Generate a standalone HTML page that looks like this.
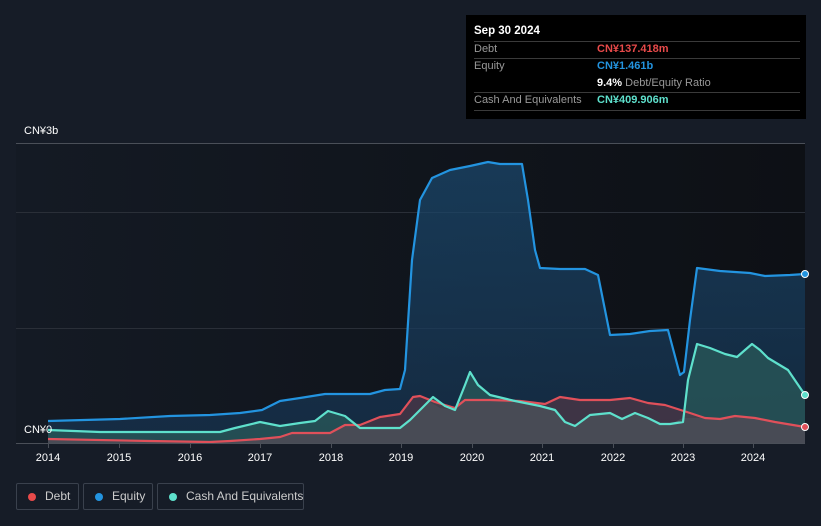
<!DOCTYPE html>
<html><head><meta charset="utf-8"><style>
body{margin:0;width:821px;height:526px;background:#161c27;font-family:"Liberation Sans","Noto Sans CJK SC",sans-serif;position:relative;overflow:hidden}
.tt{position:absolute;left:466px;top:15px;width:340px;height:104px;background:#000;color:#fff;font-size:11px}
.tt .r{position:absolute;left:8px;right:6px;border-top:1px solid #3a3a3a}
.tt span{position:absolute;white-space:nowrap}
.lab{position:absolute;color:#fff;font-size:11px}
.leg{position:absolute;top:483px;height:27px;border:1px solid #3a414d;border-radius:2px;color:#ccc;font-size:12px;line-height:25px;box-sizing:border-box;white-space:nowrap}
.leg i{position:absolute;left:11px;top:9px;width:8px;height:8px;border-radius:50%}
</style></head><body>
<svg width="821" height="526" style="position:absolute;left:0;top:0">
<defs>
<linearGradient id="ge" x1="0" y1="0" x2="0" y2="1"><stop offset="0" stop-color="#1b4a70" stop-opacity=".7"/><stop offset="1" stop-color="#163350" stop-opacity=".7"/></linearGradient>
<linearGradient id="pb" x1="0" y1="0" x2="1" y2="0"><stop offset="0" stop-color="#141a24"/><stop offset="1" stop-color="#0d1015"/></linearGradient>
</defs>
<rect x="16" y="143" width="789" height="300" fill="url(#pb)"/>
<line x1="16" y1="143.5" x2="805" y2="143.5" stroke="#4a4f58"/>
<line x1="16" y1="212.5" x2="805" y2="212.5" stroke="#2a2f38"/>
<line x1="16" y1="328.5" x2="805" y2="328.5" stroke="#2a2f38"/>
<polygon fill="url(#ge)" points="48,443 48,421 120,419 170,416 210,415 240,413 262,410 280,401 300,398 325,394 370,394 385,390 400,389 405,370 412,260 420,200 432,178 450,170 470,166 488,162 500,164 522,164 528,200 535,250 540,268 560,269 585,269 598,275 605,310 610,335 630,334 650,331 668,330 672,345 680,375 684,372 690,320 697,268 720,271 750,273 765,276 790,275 805,274 805,443"/>
<polygon fill="#2a5a5a" fill-opacity=".75" points="48,443 48,430 100,432 220,432 235,428 260,422 280,426 300,423 315,421 328,411 345,416 360,428 400,428 410,420 420,410 433,397 445,406 455,410 465,385 470,372 478,385 490,395 515,401 540,406 555,410 565,422 575,426 590,415 610,413 622,419 635,413 648,418 660,424 670,424 683,422 688,380 697,344 710,348 725,354 737,357 745,350 752,344 760,350 768,358 788,370 805,395 805,443"/>
<polygon fill="#5a3a48" fill-opacity=".6" points="48,443 48,439 150,441 210,442 230,441 260,439 280,437 292,433 330,433 345,425 360,425 380,417 400,414 413,397 420,396 435,402 455,408 465,400 490,400 520,401 545,404 560,397 580,400 610,400 630,398 648,403 665,405 690,413 705,418 720,419 735,416 755,418 775,422 805,427 805,443"/>
<polygon fill="#4a4e58" fill-opacity=".8" points="48,443 48,440 150,441 210,442 230,441 260,439 280,437 292,433 330,433 345,425 360,428 400,428 410,420 420,410 430,402 440,408 455,410 465,400 490,400 515,401 540,406 555,410 565,422 575,426 590,415 610,413 622,419 635,413 648,418 660,424 670,424 683,418 705,418 720,419 735,416 755,418 775,422 805,427 805,443"/>
<g fill="none" stroke-width="2.2" stroke-linejoin="round">
<polyline stroke="#2394e0" points="48,421 120,419 170,416 210,415 240,413 262,410 280,401 300,398 325,394 370,394 385,390 400,389 405,370 412,260 420,200 432,178 450,170 470,166 488,162 500,164 522,164 528,200 535,250 540,268 560,269 585,269 598,275 605,310 610,335 630,334 650,331 668,330 672,345 680,375 684,372 690,320 697,268 720,271 750,273 765,276 790,275 805,274"/>
<polyline stroke="#e0505a" points="48,439 150,441 210,442 230,441 260,439 280,437 292,433 330,433 345,425 360,425 380,417 400,414 413,397 420,396 435,402 455,408 465,400 490,400 520,401 545,404 560,397 580,400 610,400 630,398 648,403 665,405 690,413 705,418 720,419 735,416 755,418 775,422 805,427"/>
<polyline stroke="#5ee0cc" points="48,430 100,432 220,432 235,428 260,422 280,426 300,423 315,421 328,411 345,416 360,428 400,428 410,420 420,410 433,397 445,406 455,410 465,385 470,372 478,385 490,395 515,401 540,406 555,410 565,422 575,426 590,415 610,413 622,419 635,413 648,418 660,424 670,424 683,422 688,380 697,344 710,348 725,354 737,357 745,350 752,344 760,350 768,358 788,370 805,395"/>
</g>
<circle cx="805" cy="274" r="3.5" fill="#2394e0" stroke="#fff" stroke-width="1"/>
<circle cx="805" cy="395" r="3.5" fill="#5ee0cc" stroke="#fff" stroke-width="1"/>
<circle cx="805" cy="427" r="3.5" fill="#e0505a" stroke="#fff" stroke-width="1"/>
<line x1="16" y1="443.5" x2="805" y2="443.5" stroke="#4a4f58"/>
<g stroke="#4a4f58"><line x1="48.5" y1="443" x2="48.5" y2="448"/><line x1="119.5" y1="443" x2="119.5" y2="448"/><line x1="190.5" y1="443" x2="190.5" y2="448"/><line x1="260.5" y1="443" x2="260.5" y2="448"/><line x1="331.5" y1="443" x2="331.5" y2="448"/><line x1="401.5" y1="443" x2="401.5" y2="448"/><line x1="472.5" y1="443" x2="472.5" y2="448"/><line x1="542.5" y1="443" x2="542.5" y2="448"/><line x1="613.5" y1="443" x2="613.5" y2="448"/><line x1="683.5" y1="443" x2="683.5" y2="448"/><line x1="753.5" y1="443" x2="753.5" y2="448"/></g>
<g fill="#fff" font-size="11" text-anchor="middle" font-family="Liberation Sans,sans-serif">
<text x="48" y="461">2014</text><text x="119" y="461">2015</text><text x="190" y="461">2016</text><text x="260" y="461">2017</text><text x="331" y="461">2018</text><text x="401" y="461">2019</text><text x="472" y="461">2020</text><text x="542" y="461">2021</text><text x="613" y="461">2022</text><text x="683" y="461">2023</text><text x="753" y="461">2024</text>
</g>
</svg>
<div class="lab" style="left:24px;top:125px">CN¥3b</div>
<div class="lab" style="left:24px;top:424px">CN¥0</div>
<div class="tt">
<span style="left:8px;top:10px;font-weight:bold;font-size:11.5px">Sep 30 2024</span>
<div class="r" style="top:26px"></div>
<span style="left:8px;top:28px;color:#999">Debt</span><span style="left:131px;top:28px;color:#e84a4a;font-weight:bold">CN¥137.418m</span>
<div class="r" style="top:43px"></div>
<span style="left:8px;top:45px;color:#999">Equity</span><span style="left:131px;top:45px;color:#2394e0;font-weight:bold">CN¥1.461b</span>
<span style="left:131px;top:62px"><b>9.4%</b> <span style="position:static;color:#999">Debt/Equity Ratio</span></span>
<div class="r" style="top:77px"></div>
<span style="left:8px;top:79px;color:#999">Cash And Equivalents</span><span style="left:131px;top:79px;color:#5ee0cc;font-weight:bold">CN¥409.906m</span>
<div class="r" style="top:95px"></div>
</div>
<div class="leg" style="left:16px;width:63px"><i style="background:#e84a4a"></i><span style="position:absolute;left:28px">Debt</span></div>
<div class="leg" style="left:83px;width:70px"><i style="background:#2394e0"></i><span style="position:absolute;left:28px">Equity</span></div>
<div class="leg" style="left:157px;width:147px"><i style="background:#5ee0cc"></i><span style="position:absolute;left:28px">Cash And Equivalents</span></div>
</body></html>
